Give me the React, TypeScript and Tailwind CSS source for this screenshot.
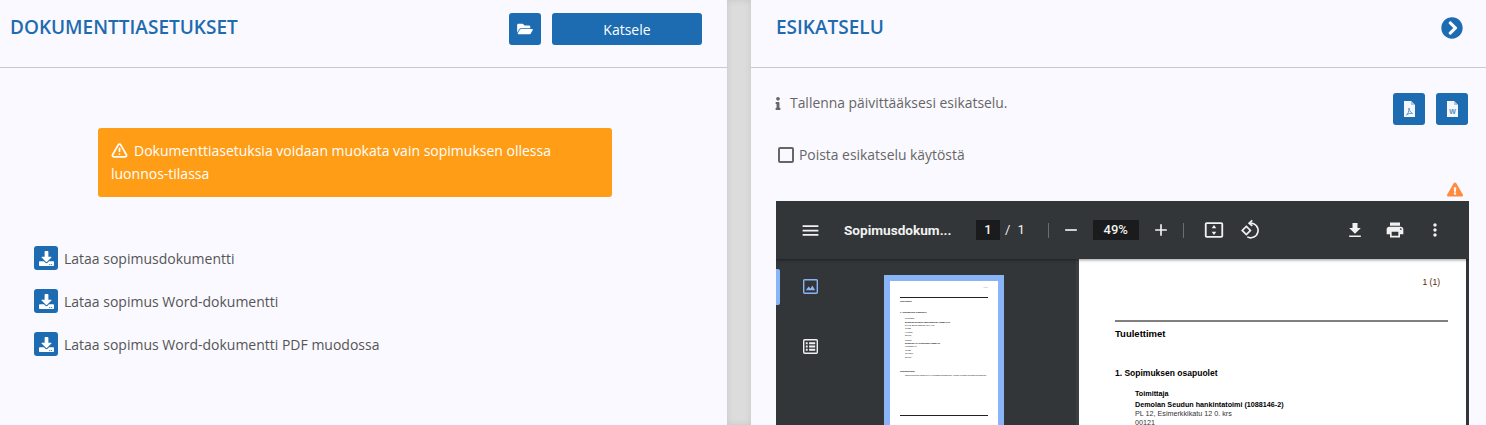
import { FaChevronCircleRight, FaDownload, FaExclamationTriangle, FaFolderOpen, FaInfo } from "react-icons/fa";
import { TriangleAlert } from "lucide-react";

const downloads = ["Lataa sopimusdokumentti", "Lataa sopimus Word-dokumentti", "Lataa sopimus Word-dokumentti PDF muodossa"];

function Settings() {
  return (
    <section className="w-[727px] shrink-0 h-full">
      <header className="h-[68px] border-b border-[#c9c9d2] flex items-start pl-[10px] pr-[25px]">
        <h2 className="mt-[14px] text-[19px] leading-[26px] font-semibold text-[#1f6bb0]">DOKUMENTTIASETUKSET</h2>
        <div className="ml-auto mt-[13px] flex gap-[11px]">
          <button className="w-[32px] h-[32px] rounded-[3px] bg-[#1d6bb1] text-white flex items-center justify-center">
            <FaFolderOpen className="w-[16px] h-[14px]" />
          </button>
          <button className="w-[150px] h-[32px] rounded-[3px] bg-[#1d6bb1] text-white text-[14px]">Katsele</button>
        </div>
      </header>
      <div className="ml-[98px] mt-[60px] w-[514px] h-[69px] rounded-[3px] bg-[#ff9d16] text-white text-[14px] leading-[23px] pl-[13px] pr-[9px] py-[11px]">
        <TriangleAlert className="inline-block w-[17px] h-[17px] mr-[6px] align-[-3px]" strokeWidth={2.5} />
        Dokumenttiasetuksia voidaan muokata vain sopimuksen ollessa luonnos-tilassa
      </div>
      <ul className="mt-[49px] ml-[34px] flex flex-col gap-[19px]">
        {downloads.map((label) => (
          <li key={label} className="flex items-center gap-[6px] h-[24px] text-[14px] text-[#555555]">
            <span className="w-[24px] h-[24px] rounded-[3px] bg-[#1d6bb1] text-white flex items-center justify-center">
              <FaDownload className="w-[15px] h-[15px]" />
            </span>
            {label}
          </li>
        ))}
      </ul>
    </section>
  );
}

function ViewerToolbar() {
  return (
    <div className="h-[58px] bg-[#323639] flex items-center text-[#f1f1f1] shrink-0 shadow-[0_1px_3px_rgba(0,0,0,0.4)] relative z-10 font-['Roboto',sans-serif]">
      <svg viewBox="0 0 24 24" className="ml-[24px] w-[21px] h-[21px] fill-current">
        <path d="M3 18h18v-2H3v2zm0-5h18v-2H3v2zm0-7v2h18V6H3z" />
      </svg>
      <span className="ml-[23px] w-[110px] text-[13.6px] font-bold whitespace-nowrap">Sopimusdokum...</span>
      <span className="ml-[22px] w-[24px] h-[20px] bg-[#191b1c] text-center text-[13px] font-medium leading-[20px]">1</span>
      <span className="ml-[5px] text-[13px]">/</span>
      <span className="ml-[7px] text-[13px]">1</span>
      <span className="ml-[23px] w-px h-[15px] bg-[#6b6e70]" />
      <svg viewBox="0 0 24 24" className="ml-[12px] w-[20px] h-[20px] fill-current"><path d="M19 13H5v-2h14v2z" /></svg>
      <span className="ml-[12px] w-[46px] h-[20px] bg-[#191b1c] text-center text-[13px] font-medium leading-[20px]">49%</span>
      <svg viewBox="0 0 24 24" className="ml-[12px] w-[20px] h-[20px] fill-current"><path d="M19 13h-6v6h-2v-6H5v-2h6V5h2v6h6v2z" /></svg>
      <span className="ml-[12px] w-px h-[15px] bg-[#6b6e70]" />
      <svg viewBox="0 0 24 24" className="ml-[19px] w-[22px] h-[22px] fill-current">
        <path d="M20 3.500H4a2 2 0 0 0-2 2v13a2 2 0 0 0 2 2h16a2 2 0 0 0 2-2v-13a2 2 0 0 0-2-2zm0 15H4v-13h16v13zM12 6.500 9.500 10h5L12 6.500zm0 11 2.500-3.500h-5l2.500 3.500z" />
      </svg>
      <svg viewBox="0 0 24 24" className="ml-[14px] w-[22px] h-[22px] fill-none stroke-current" strokeWidth={1.8}>
        <path d="M12 4.500a8 8 0 1 1-3 15" />
        <path d="M14.500 1.500 11 4.500l3.500 3" />
        <path d="m8 8 4.500 4.500L8 17l-4.500-4.500z" />
      </svg>
      <svg viewBox="0 0 24 24" className="ml-auto w-[20px] h-[20px] fill-current"><path d="M19 9.500h-4v-6H9v6H5l7 7 7-7zM5 18.500v2h14v-2H5z" /></svg>
      <svg viewBox="0 0 24 24" className="ml-[20px] w-[20px] h-[20px] fill-current">
        <path d="M19 8H5c-1.660 0-3 1.340-3 3v6h4v4h12v-4h4v-6c0-1.660-1.340-3-3-3zm-3 11H8v-5h8v5zm3-7c-.55 0-1-.45-1-1s.45-1 1-1 1 .45 1 1-.45 1-1 1zm-1-9H6v4h12V3z" />
      </svg>
      <svg viewBox="0 0 24 24" className="ml-[20px] mr-[24px] w-[20px] h-[20px] fill-current">
        <path d="M12 8c1.100 0 2-.9 2-2s-.9-2-2-2-2 .9-2 2 .9 2 2 2zm0 2c-1.100 0-2 .9-2 2s.9 2 2 2 2-.9 2-2-.9-2-2-2zm0 6c-1.100 0-2 .9-2 2s.9 2 2 2 2-.9 2-2-.9-2-2-2z" />
      </svg>
    </div>
  );
}

function Thumbnail() {
  return (
    <div className="ml-[66px] mt-[16px] w-[120px] h-[160px] bg-[#8ab4f8] p-[6px] shrink-0">
      <div className="h-full bg-white px-[10px] pt-[5px] text-[2.2px] leading-[3.4px] text-[#111111] font-['Liberation_Sans',sans-serif] overflow-hidden">
        <div className="text-right text-[#777777]">1 (1)</div>
        <div className="mt-[8px] h-[1px] bg-[#222222]" />
        <div className="mt-[2px] font-bold">Tuulettimet</div>
        <div className="mt-[7px] font-bold">1. Sopimuksen osapuolet</div>
        <div className="mt-[3px] ml-[5px]">
          <div>Toimittaja</div>
          <div className="font-bold">Demolan Seudun hankintatoimi (1088146-2)</div>
          <div>PL 12, Esimerkkikatu 12 0. krs</div>
          <div>00121</div>
          <div>Helsinki</div>
          <div>Suomi</div>
          <div className="mt-[1px]">Tilaaja</div>
          <div className="font-bold">Demolan Oy Testitilaaja (1088146)</div>
          <div>Lumikatu 14</div>
          <div>00120</div>
          <div>Joensuu</div>
          <div>Suomi</div>
        </div>
        <div className="mt-[11px] font-bold">Sopimuskausi</div>
        <div className="ml-[5px] whitespace-nowrap">Tämä sopimus alkaa ja on voimassa toistaiseksi, ja sitä voidaan muuttaa kirjallisesti.</div>
        <div className="mt-[38px] h-[1px] bg-[#222222]" />
      </div>
    </div>
  );
}

function FileIcon({ word }: { word?: boolean }) {
  return (
    <svg viewBox="0 0 11 16" className="w-[11px] h-[16px]">
      <path d="M0 0h7l4 4v12H0z" fill="#f4f8fc" />
      <path d="M7 0v4h4z" fill="#a9c8e4" />
      {word ? (
        <text x="5.5" y="13" textAnchor="middle" fontSize="7" fontWeight="700" fontFamily="Liberation Sans, sans-serif" fill="#4f8dc6">W</text>
      ) : (
        <path d="M5 7c.2 2 1 4 3.500 5.500C6.500 12 4 12.500 2.500 14 4 13 5 10.500 5 7z" fill="none" stroke="#4f8dc6" strokeWidth="0.9" />
      )}
    </svg>
  );
}

function Preview() {
  return (
    <section className="flex-1 min-w-0 h-full">
      <header className="h-[68px] border-b border-[#c9c9d2] flex items-start pl-[25px] pr-[23px]">
        <h2 className="mt-[14px] text-[19px] leading-[26px] font-semibold text-[#1f6bb0]">ESIKATSELU</h2>
        <FaChevronCircleRight className="ml-auto mt-[17px] w-[22px] h-[22px] text-[#1d6bb1]" />
      </header>
      <div className="flex items-start h-[51px] pl-[24px] pr-[18px] pt-[25px]">
        <FaInfo className="mt-[4px] w-[6px] h-[13px] text-[#666666]" />
        <p className="ml-[9px] text-[13.9px] leading-[22px] text-[#666666] -mt-px">Tallenna päivittääksesi esikatselu.</p>
        <div className="ml-auto flex gap-[11px]">
          <button className="w-[32px] h-[32px] rounded-[3px] bg-[#1d6bb1] flex items-center justify-center">
            <FileIcon />
          </button>
          <button className="w-[32px] h-[32px] rounded-[3px] bg-[#1d6bb1] flex items-center justify-center">
            <FileIcon word />
          </button>
        </div>
      </div>
      <label className="flex items-center h-[22px] mt-[25px] ml-[27px] text-[13.9px] text-[#666666]">
        <span className="w-[16px] h-[16px] border-2 border-[#666666] rounded-[2px]" />
        <span className="ml-[5px]">Poista esikatselu käytöstä</span>
      </label>
      <div className="h-[35px] flex justify-end items-end pr-[23px] pb-[4px]">
        <FaExclamationTriangle className="w-[16px] h-[15px] text-[#ff8a3d]" />
      </div>
      <div className="w-[693px] ml-[25px] h-[224px] flex flex-col bg-[#323639] overflow-hidden">
        <ViewerToolbar />
        <div className="flex flex-1 min-h-0">
          <aside className="w-[300px] shrink-0 flex relative">
            <span className="absolute left-0 top-[10px] w-[4px] h-[36px] bg-[#8ab4f8] rounded-r-[2px]" />
            <div className="ml-[27px] mt-[20px] flex flex-col gap-[45px] shrink-0">
              <svg viewBox="0 0 16 16" className="w-[15px] h-[15px] text-[#8ab4f8]">
                <rect x="0.75" y="0.75" width="14.5" height="14.5" rx="1" fill="none" stroke="currentColor" strokeWidth="1.5" />
                <path d="M3 12 6 8l2 2 2-3 3 5z" fill="currentColor" />
              </svg>
              <svg viewBox="0 0 16 16" className="w-[15px] h-[15px] text-[#f1f1f1]">
                <rect x="0.75" y="0.75" width="14.5" height="14.5" rx="1" fill="none" stroke="currentColor" strokeWidth="1.5" />
                <path d="M3 3.500h2v2H3zM6.500 3.500H13v2H6.500zM3 7h2v2H3zM6.500 7H13v2H6.500zM3 10.500h2v2H3zM6.500 10.500H13v2H6.500z" fill="currentColor" />
              </svg>
            </div>
            <Thumbnail />
          </aside>
          <div className="w-[3px] bg-[#3c3f42] shrink-0" />
          <div className="w-[387px] bg-white font-['Liberation_Sans',sans-serif] text-black pl-[36px] pr-[18px] pt-[17px] overflow-hidden">
            <div className="text-right text-[8.5px] leading-[12px] pr-[8px] text-[#5a1a00]">1 (1)</div>
            <div className="mt-[32px] h-[2px] bg-[#808080]" />
            <div className="mt-[5px] text-[9.5px] leading-[13px] font-bold">Tuulettimet</div>
            <div className="mt-[27px] text-[8.5px] leading-[12px] font-bold">1. Sopimuksen osapuolet</div>
            <div className="ml-[20px] mt-[10px] text-[7.2px] leading-[9px]">
              <div className="font-bold">Toimittaja</div>
              <div className="mt-[2px] font-bold">Demolan Seudun hankintatoimi (1088146-2)</div>
              <div className="text-[#333333]">PL 12, Esimerkkikatu 12 0. krs</div>
              <div className="text-[#333333]">00121</div>
            </div>
          </div>
        </div>
      </div>
    </section>
  );
}

export default function App() {
  return (
    <div className="w-[1486px] h-[425px] overflow-hidden flex bg-[#faf9ff] font-['Open_Sans',sans-serif]">
      <Settings />
      <div className="w-[24px] shrink-0 h-full bg-[#dcdcdc] shadow-[inset_0_0_6px_rgba(0,0,0,0.1)]" />
      <Preview />
    </div>
  );
}
